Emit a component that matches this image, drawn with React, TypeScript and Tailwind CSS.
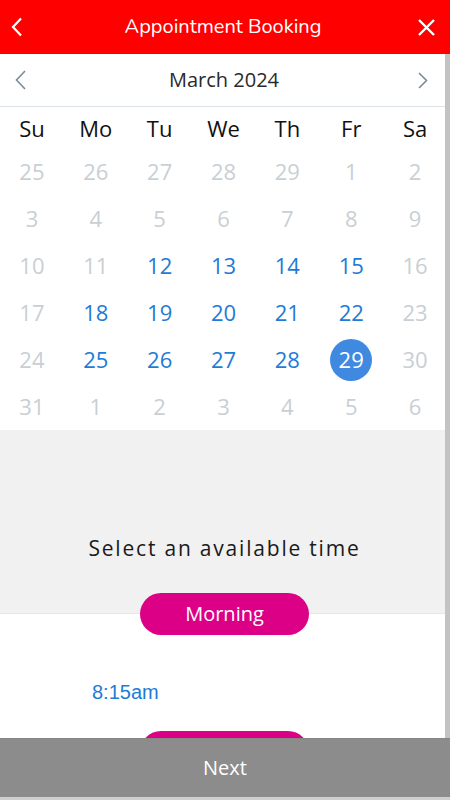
import React from 'react';

type Day = { n: number; kind: 'off' | 'open' | 'sel' };

const weekdays = ['Su', 'Mo', 'Tu', 'We', 'Th', 'Fr', 'Sa'];

const openDays = [12, 13, 14, 15, 18, 19, 20, 21, 22, 25, 26, 27, 28];

function buildDays(): Day[] {
  const days: Day[] = [];
  // trailing days of February
  [25, 26, 27, 28, 29].forEach((n) => days.push({ n, kind: 'off' }));
  for (let n = 1; n <= 31; n++) {
    if (n === 29) days.push({ n, kind: 'sel' });
    else days.push({ n, kind: openDays.includes(n) ? 'open' : 'off' });
  }
  [1, 2, 3, 4, 5, 6].forEach((n) => days.push({ n, kind: 'off' }));
  return days;
}

export default function App() {
  const days = buildDays();

  return (
    <div className="w-[450px] h-[800px] flex flex-col bg-white overflow-hidden font-['Open_Sans',sans-serif]">
      {/* Header */}
      <header className="h-[54px] shrink-0 bg-[#ff0000] flex items-center justify-between px-[10px]">
        <button className="w-[14px] h-[22px] flex items-center justify-center">
          <svg width="12" height="20" viewBox="0 0 12 20" fill="none">
            <path d="M10 1.5 L2 10 L10 18.5" stroke="white" strokeWidth="2.2" />
          </svg>
        </button>
        <h1 className="text-white text-[20px] leading-none font-['Nunito','Open_Sans',sans-serif] ml-[6px]">
          Appointment Booking
        </h1>
        <button className="w-[20px] h-[20px] flex items-center justify-center mr-[4px]">
          <svg width="17" height="17" viewBox="0 0 17 17" fill="none">
            <path d="M1 1 L16 16 M16 1 L1 16" stroke="white" strokeWidth="2.4" />
          </svg>
        </button>
      </header>

      {/* Scrolling body */}
      <div className="relative flex-1 overflow-hidden">
        <div className="absolute z-20 right-0 top-0 bottom-0 w-[5px] bg-[#c3c3c3]" />

        {/* Month nav */}
        <div className="h-[53px] border-b border-[#dde2e6] flex items-center justify-between pl-[15px] pr-[22px]">
          <svg width="11" height="20" viewBox="0 0 11 20" fill="none">
            <path d="M10 1 L1.5 10 L10 19" stroke="#7b8b96" strokeWidth="1.6" />
          </svg>
          <span className="text-[20px] text-[#2a2a2a] leading-none ml-[4px]">March 2024</span>
          <svg width="10" height="17" viewBox="0 0 10 17" fill="none">
            <path d="M1 1 L8.5 8.5 L1 16" stroke="#7b8b96" strokeWidth="1.6" />
          </svg>
        </div>

        {/* Calendar */}
        <div className="w-[447px] grid grid-cols-7">
          {weekdays.map((w) => (
            <div key={w} className="h-[41px] flex items-center justify-center text-[22px] text-[#111] pt-[2px]">
              {w}
            </div>
          ))}
          {days.map((d, i) => (
            <div key={i} className="h-[47px] flex items-center justify-center">
              {d.kind === 'sel' ? (
                <span className="w-[42px] h-[42px] rounded-full bg-[#3f8ae0] text-white text-[22px] flex items-center justify-center">
                  {d.n}
                </span>
              ) : (
                <span className={`text-[22px] ${d.kind === 'open' ? 'text-[#1e7bd6]' : 'text-[#c9cfd3]'}`}>
                  {d.n}
                </span>
              )}
            </div>
          ))}
        </div>

        {/* Time section */}
        <div className="w-[449px] bg-[#f1f1f1] border-b border-[#e6e6e6] flex flex-col items-center pt-[104px]">
          <p className="text-[21px] leading-[28px] tracking-[1.8px] text-[#1a1a1a]">Select an available time</p>
          <button className="relative z-10 mt-[31px] -mb-[22px] w-[169px] h-[42px] rounded-full bg-[#dc0087] text-white text-[20px]">
            Morning
          </button>
        </div>

        <div className="w-[449px] bg-white flex flex-col">
          <div className="h-[95px] flex items-end pl-[92px] pb-[7px]">
            <span className="text-[20px] leading-none text-[#1e7bd6] font-['Liberation_Sans',Arial,sans-serif]">
              8:15am
            </span>
          </div>
          <div className="flex justify-center mt-[22px]">
            <div className="w-[169px] h-[42px] rounded-full bg-[#dc0087]" />
          </div>
        </div>
      </div>

      {/* Footer */}
      <footer className="h-[62px] shrink-0 bg-[#8c8c8c] border-t border-[#858585] border-b-[3px] border-b-[#cfcfcf] flex items-center justify-center">
        <span className="text-white text-[20px] leading-none">Next</span>
      </footer>
    </div>
  );
}
